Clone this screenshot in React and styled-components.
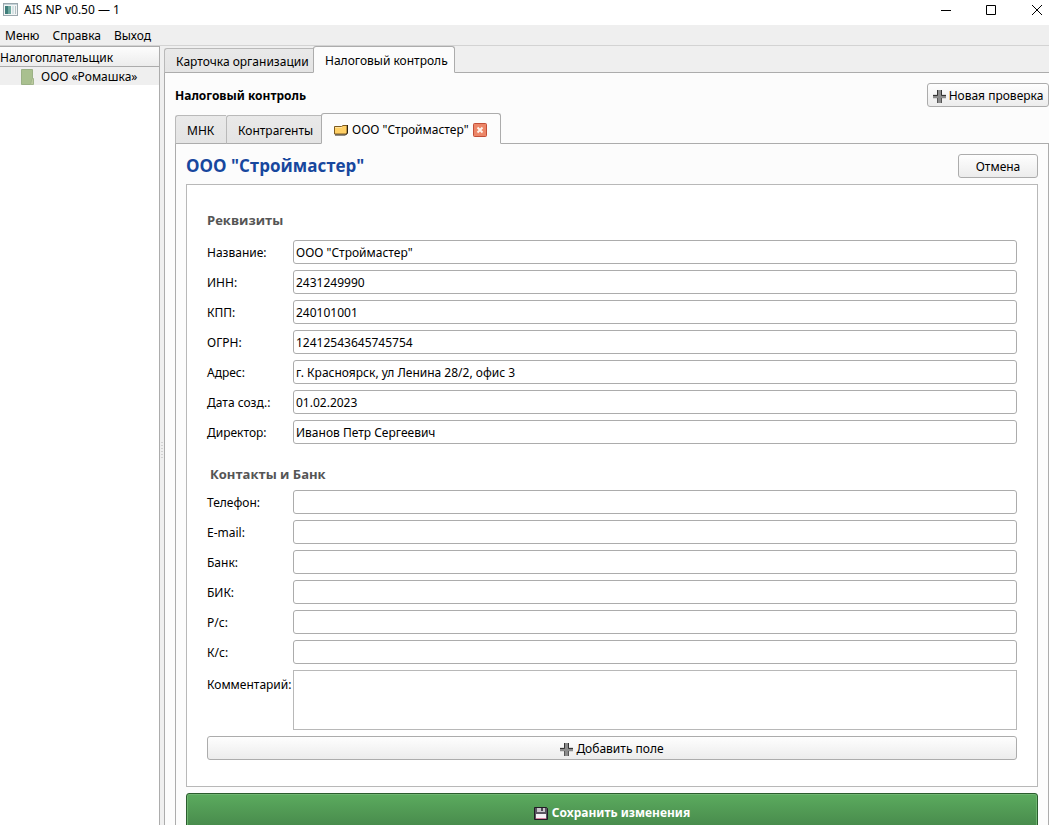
import React from "react";
import styled, { createGlobalStyle } from "styled-components";

const GlobalStyle = createGlobalStyle`
  *, *::before, *::after { box-sizing: border-box; }
  body {
    margin: 0;
    background: #efefef;
    color: #000;
    font-family: "Noto Sans", "Open Sans", sans-serif;
    font-size: 12px;
    line-height: 16px;
  }
  button, input, textarea { font: inherit; color: inherit; }
`;

const line = "#acacac";
const headingFont = '"Open Sans", "Noto Sans", sans-serif';

const Window = styled.div`
  display: flex;
  flex-direction: column;
  height: 100vh;
  overflow: hidden;
`;

const TitleBar = styled.header`
  display: flex;
  align-items: center;
  flex: none;
  height: 25px;
  padding: 0 5px 6px 3px;
  background: #fff;
`;

const WindowTitle = styled.span`
  flex: 1;
  margin-left: 6px;
`;

const WindowControls = styled.div`
  display: flex;
  gap: 29px;
`;

const WindowButton = styled.button`
  display: flex;
  padding: 0;
  border: 0;
  background: none;
`;

const MenuBar = styled.nav`
  display: flex;
  align-items: center;
  flex: none;
  gap: 13px;
  height: 21px;
  padding: 2px 0 0 5px;
  border-bottom: 1px solid #d3d3d3;
`;

const MenuItem = styled.button`
  padding: 0;
  border: 0;
  background: none;
`;

const Body = styled.div`
  display: flex;
  flex: 1;
  min-height: 0;
`;

const Sidebar = styled.aside`
  flex: none;
  width: 160px;
  border: solid ${line};
  border-width: 1px 1px 0 0;
  background: #fff;
`;

const SidebarHeader = styled.div`
  height: 20px;
  padding-top: 3px;
  border-bottom: 1px solid ${line};
  background: linear-gradient(#fdfdfd, #ececec);
`;

const TreeItem = styled.div`
  display: flex;
  align-items: center;
  gap: 7px;
  height: 18px;
  padding: 2px 0 0 21px;
  background: #efefef;
`;

const Splitter = styled.div`
  display: flex;
  align-items: center;
  justify-content: center;
  flex: none;
  width: 4px;
  padding-top: 30px;
`;

const Main = styled.main`
  display: flex;
  flex-direction: column;
  flex: 1;
  min-width: 0;
`;

const Tabs = styled.div`
  display: flex;
  align-items: flex-end;
  flex: none;
  position: relative;
  z-index: 1;
  height: ${(p) => p.$height}px;
  margin: ${(p) => p.$gap || 0}px 0 -1px;
`;

const Tab = styled.button`
  display: flex;
  align-items: center;
  flex: none;
  width: ${(p) => p.$width}px;
  height: ${(p) => (p.$active ? "100%" : "calc(100% - 2px)")};
  padding: 2px 0 0 11px;
  border: 1px solid ${(p) => (p.$active ? line : "#b9b9b9")};
  border-bottom-color: ${(p) => (p.$active ? "#fcfcfc" : line)};
  border-right-width: ${(p) => (p.$active ? 1 : 0)}px;
  border-radius: ${(p) => (p.$active ? "3px 3px 0 0" : "3px 0 0 0")};
  background: ${(p) => (p.$active ? "#fcfcfc" : "linear-gradient(#e9e9e9, #e4e4e4)")};
  white-space: nowrap;
`;

const TabIcon = styled.span`
  display: flex;
  margin: 0 4px 0 1px;
`;

const CloseMark = styled.svg`
  margin-left: 4px;
`;

const OuterPane = styled.section`
  display: flex;
  flex-direction: column;
  flex: 1;
  padding: 10px 0 0 10px;
  border: solid ${line};
  border-width: 1px 0 0 1px;
  background: #fcfcfc;
`;

const Row = styled.div`
  display: flex;
  align-items: center;
  justify-content: space-between;
`;

const SectionTitle = styled.h1`
  margin: 0;
  padding-top: 2px;
  font-size: 12px;
  font-weight: 700;
`;

const Button = styled.button`
  display: flex;
  align-items: center;
  justify-content: center;
  gap: 3px;
  width: ${(p) => p.$width};
  height: 24px;
  padding: 2px 0 0;
  border: 1px solid ${line};
  border-radius: 3px;
  background: linear-gradient(#fefefe, #ececec);
  white-space: nowrap;
`;

const InnerPane = styled.section`
  display: flex;
  flex-direction: column;
  flex: 1;
  gap: 6px;
  padding: 10px 10px 0;
  border: solid ${line};
  border-width: 1px 1px 0;
`;

const CompanyName = styled.h2`
  margin: 0;
  color: #17479e;
  font-family: ${headingFont};
  font-size: 17px;
  line-height: 24px;
`;

const Form = styled.form`
  display: flex;
  flex-direction: column;
  gap: 6px;
`;

const Frame = styled.div`
  display: flex;
  flex-direction: column;
  gap: 6px;
  padding: 22px 20px 26px;
  border: 1px solid #b8b8b8;
  background: #fff;
`;

const GroupTitle = styled.h3`
  margin: ${(p) => (p.$second ? "12px 0 0 3px" : "0")};
  padding: ${(p) => (p.$second ? "2px 0 0" : "3px 0 4px")};
  color: #555;
  font-family: ${headingFont};
  font-size: 13px;
  line-height: 20px;
`;

const Field = styled.label`
  display: grid;
  grid-template-columns: 80px minmax(0, 1fr);
  column-gap: 6px;
  white-space: nowrap;
`;

const Caption = styled.span`
  padding-top: ${(p) => (p.$tall ? 7 : 5)}px;
`;

const TextInput = styled.input`
  width: 100%;
  height: 24px;
  padding: 0 2px;
  border: 1px solid ${line};
  border-radius: 3px;
  background: #fff;
  outline: 0;
`;

const TextArea = styled.textarea`
  display: block;
  width: 100%;
  height: 60px;
  padding: 2px;
  border: 1px solid #b8b8b8;
  background: #fff;
  outline: 0;
  resize: none;
`;

const SaveButton = styled.button`
  display: flex;
  align-items: center;
  justify-content: center;
  gap: 4px;
  height: 40px;
  padding: 0;
  border: 1px solid #2a5c2d;
  border-radius: 3px;
  background: linear-gradient(#5bab5e, #458549);
  box-shadow: inset 0 0 0 1px #6fb571;
  color: #fff;
  font-weight: 700;
`;

const PlusIcon = () => (
  <svg width="13" height="13" viewBox="0 0 13 13" aria-hidden="true">
    <path d="M4 1h5v3h4v5H9v4H4V9H0V4h4z" fill="#a8a8a8" opacity=".35" />
    <path d="M4 0h5v5h4v3H9v5H4V8H0V5h4z" fill="#8c8c8c" />
    <path d="M0 5.500h4.500V0M8.500 0v5.500H13" fill="none" stroke="#333" />
    <path d="M4.500 13V8M8.500 13V8" fill="none" stroke="#555" />
  </svg>
);

const FolderIcon = () => (
  <svg width="14" height="12" viewBox="0 0 14 12" aria-hidden="true">
    <path d="M.5 2.500h7l1.500-1h4v8.500H.5z" fill="#ffd066" stroke="#7c5a20" />
    <path d="M13.500 1v8l-2 2H1" fill="none" stroke="#2b2112" />
    <path d="M1 3.500h7" stroke="#ffe3a0" />
  </svg>
);

const CloseIcon = () => (
  <CloseMark width="14" height="14" viewBox="0 0 14 14" role="img" aria-label="Закрыть">
    <rect x=".5" y=".5" width="13" height="13" rx="1" fill="#ec8668" stroke="#c24f38" />
    <path d="M4.500 4.500l5 5M9.500 4.500l-5 5" stroke="#fff3ea" strokeWidth="2" />
  </CloseMark>
);

const FloppyIcon = () => (
  <svg width="14" height="13" viewBox="0 0 14 13" aria-hidden="true">
    <path d="M.5.5h12l1 1v11H.5z" fill="#5a5560" stroke="#211c25" />
    <path d="M3 1h8v4H3z" fill="#c9c6cb" />
    <path d="M7 1h2v3H7z" fill="#4b4652" />
    <path d="M2 7h10v5H2z" fill="#f5f2f4" />
    <path d="M2 11h10v1H2z" fill="#d8809f" />
  </svg>
);

const AppIcon = () => (
  <svg width="15" height="13" viewBox="0 0 15 13" aria-hidden="true">
    <rect x=".5" y=".5" width="14" height="12" fill="#f3f5f5" stroke="#9aa7ad" />
    <path d="M1 1h13v1H1z" fill="#c4d2d8" />
    <path d="M2 3h6v8H2z" fill="#6fa9a0" />
    <path d="M2 3h3v8H2z" fill="#3f7d7a" />
    <path d="M9 3h2v8H9z" fill="#d5e2e4" />
    <path d="M12 3h1v8h-1z" fill="#b4c2c6" />
  </svg>
);

const BookIcon = () => (
  <svg width="13" height="16" viewBox="0 0 13 16" aria-hidden="true">
    <path d="M.5.5h11v15H.5z" fill="#a9c08f" stroke="#9bb186" />
    <path d="M11 9.500h1.500v6H9.500z" fill="#bccb9f" stroke="#a2b58c" />
  </svg>
);

const GripIcon = () => (
  <svg width="2" height="17" viewBox="0 0 2 17" aria-hidden="true">
    <path d="M1 0v17" stroke="#b5b5b5" strokeDasharray="1 2" />
  </svg>
);

const details = [
  ["Название:", 'ООО "Строймастер"'],
  ["ИНН:", "2431249990"],
  ["КПП:", "240101001"],
  ["ОГРН:", "12412543645745754"],
  ["Адрес:", "г. Красноярск, ул Ленина 28/2, офис 3"],
  ["Дата созд.:", "01.02.2023"],
  ["Директор:", "Иванов Петр Сергеевич"],
];

const contacts = ["Телефон:", "E-mail:", "Банк:", "БИК:", "Р/с:", "К/с:"];

const TextField = ({ label, value = "" }) => (
  <Field>
    <Caption>{label}</Caption>
    <TextInput type="text" defaultValue={value} />
  </Field>
);

export default function App() {
  return (
    <Window>
      <GlobalStyle />
      <TitleBar>
        <AppIcon />
        <WindowTitle>AIS NP v0.50 — 1</WindowTitle>
        <WindowControls>
          <WindowButton aria-label="Свернуть">
            <svg width="16" height="12" viewBox="0 0 16 12"><path d="M3 6.500h10" stroke="#000" /></svg>
          </WindowButton>
          <WindowButton aria-label="Развернуть">
            <svg width="16" height="12" viewBox="0 0 16 12"><path d="M3.500 1.500h9v9h-9z" fill="none" stroke="#000" /></svg>
          </WindowButton>
          <WindowButton aria-label="Закрыть">
            <svg width="16" height="12" viewBox="0 0 16 12"><path d="M4 1l10 10M14 1L4 11" stroke="#000" /></svg>
          </WindowButton>
        </WindowControls>
      </TitleBar>
      <MenuBar>
        <MenuItem>Меню</MenuItem>
        <MenuItem>Справка</MenuItem>
        <MenuItem>Выход</MenuItem>
      </MenuBar>
      <Body>
        <Sidebar>
          <SidebarHeader>Налогоплательщик</SidebarHeader>
          <TreeItem>
            <BookIcon />
            ООО «Ромашка»
          </TreeItem>
        </Sidebar>
        <Splitter>
          <GripIcon />
        </Splitter>
        <Main>
          <Tabs $height={27} role="tablist">
            <Tab $width={149} role="tab" aria-selected="false">Карточка организации</Tab>
            <Tab $width={142} $active role="tab" aria-selected="true">Налоговый контроль</Tab>
          </Tabs>
          <OuterPane>
            <Row>
              <SectionTitle>Налоговый контроль</SectionTitle>
              <Button type="button" $width="122px">
                <PlusIcon />
                Новая проверка
              </Button>
            </Row>
            <Tabs $height={31} $gap={6} role="tablist">
              <Tab $width={51} role="tab" aria-selected="false">МНК</Tab>
              <Tab $width={95} role="tab" aria-selected="false">Контрагенты</Tab>
              <Tab $width={180} $active role="tab" aria-selected="true">
                <TabIcon>
                  <FolderIcon />
                </TabIcon>
                ООО "Строймастер"
                <CloseIcon />
              </Tab>
            </Tabs>
            <InnerPane>
              <Row>
                <CompanyName>ООО "Строймастер"</CompanyName>
                <Button type="button" $width="80px">Отмена</Button>
              </Row>
              <Form>
                <Frame>
                  <GroupTitle>Реквизиты</GroupTitle>
                  {details.map(([label, value]) => (
                    <TextField key={label} label={label} value={value} />
                  ))}
                  <GroupTitle $second>Контакты и Банк</GroupTitle>
                  {contacts.map((label) => (
                    <TextField key={label} label={label} />
                  ))}
                  <Field>
                    <Caption $tall>Комментарий:</Caption>
                    <TextArea />
                  </Field>
                  <Button type="button" $width="100%">
                    <PlusIcon />
                    Добавить поле
                  </Button>
                </Frame>
                <SaveButton type="button">
                  <FloppyIcon />
                  Сохранить изменения
                </SaveButton>
              </Form>
            </InnerPane>
          </OuterPane>
        </Main>
      </Body>
    </Window>
  );
}
